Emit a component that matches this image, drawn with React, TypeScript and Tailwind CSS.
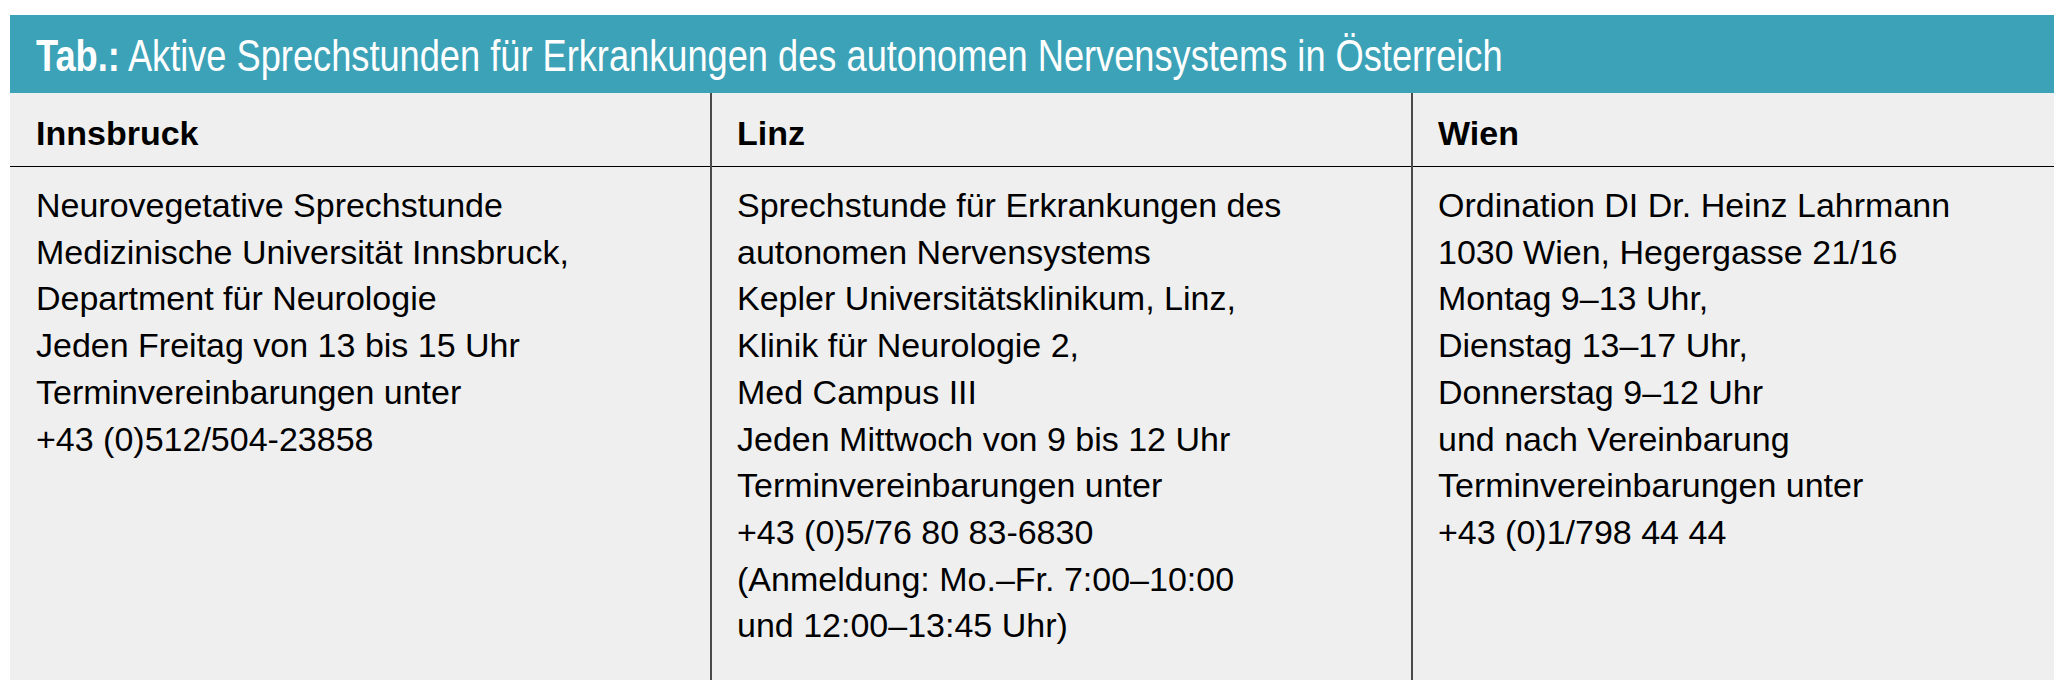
const columns = [
  {
    city: 'Innsbruck',
    lines: [
      'Neurovegetative Sprechstunde',
      'Medizinische Universität Innsbruck,',
      'Department für Neurologie',
      'Jeden Freitag von 13 bis 15 Uhr',
      'Terminvereinbarungen unter',
      '+43 (0)512/504-23858',
    ],
  },
  {
    city: 'Linz',
    lines: [
      'Sprechstunde für Erkrankungen des',
      'autonomen Nervensystems',
      'Kepler Universitätsklinikum, Linz,',
      'Klinik für Neurologie 2,',
      'Med Campus III',
      'Jeden Mittwoch von 9 bis 12 Uhr',
      'Terminvereinbarungen unter',
      '+43 (0)5/76 80 83-6830',
      '(Anmeldung: Mo.–Fr. 7:00–10:00',
      'und 12:00–13:45 Uhr)',
    ],
  },
  {
    city: 'Wien',
    lines: [
      'Ordination DI Dr. Heinz Lahrmann',
      '1030 Wien, Hegergasse 21/16',
      'Montag 9–13 Uhr,',
      'Dienstag 13–17 Uhr,',
      'Donnerstag 9–12 Uhr',
      'und nach Vereinbarung',
      'Terminvereinbarungen unter',
      '+43 (0)1/798 44 44',
    ],
  },
]

export default function App() {
  return (
    <div className="min-h-[697px] bg-white pt-[15px] pl-[10px]">
      <div className="w-[2044px]">
        {/* Title bar — condensed face isn't installed, so squeeze horizontally */}
        <div className="h-[78px] bg-[#3ca2b8] pt-[19px] pl-[26px] text-white text-[44px] leading-[43px] whitespace-nowrap font-['Liberation_Sans',Arial,sans-serif]">
          <span className="inline-block origin-left scale-x-[0.823]">
            <span className="font-bold">Tab.:</span> Aktive Sprechstunden für Erkrankungen des autonomen Nervensystems in Österreich
          </span>
        </div>

        {/* Columns */}
        <div className="grid grid-cols-[700px_701px_643px] bg-[#efefef] text-black text-[34px] leading-[46.7px] font-['Liberation_Sans',Arial,sans-serif]">
          {columns.map((col, i) => (
            <div
              key={col.city}
              className={`h-[587px] flex flex-col ${i > 0 ? 'border-l-2 border-[#4a4a4a]' : ''}`}
            >
              <div
                className={`h-[74px] pt-[17px] border-b-[1.5px] border-black font-bold ${
                  i === 0 ? 'pl-[26px]' : 'pl-[25px]'
                }`}
              >
                {col.city}
              </div>
              <div className={`pt-[15px] ${i === 0 ? 'pl-[26px]' : 'pl-[25px]'}`}>
                {col.lines.map((line) => (
                  <div key={line} className="whitespace-nowrap">
                    {line}
                  </div>
                ))}
              </div>
            </div>
          ))}
        </div>
      </div>
    </div>
  )
}
